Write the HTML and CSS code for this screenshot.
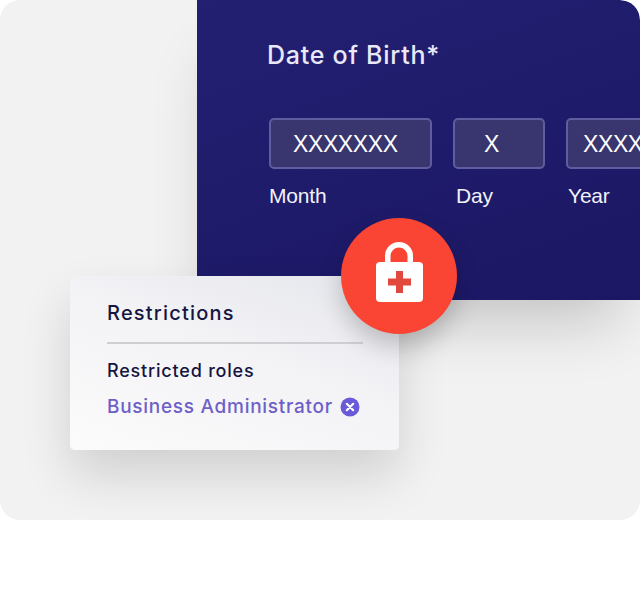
FILE: index.html
```html
<!DOCTYPE html>
<html>
<head>
    <meta charset="UTF-8">
    <title>Date of Birth restrictions</title>
    <link rel="stylesheet" href="styles.css">
</head>
<body>
    <div class="panel">
        <div class="form-card">
            <h2 class="form-title">Date of Birth*</h2>
            <div class="fields">
                <div class="field field-month">
                    <div class="field-box">XXXXXXX</div>
                    <span class="field-label">Month</span>
                </div>
                <div class="field field-day">
                    <div class="field-box">X</div>
                    <span class="field-label">Day</span>
                </div>
                <div class="field field-year">
                    <div class="field-box">XXXX</div>
                    <span class="field-label">Year</span>
                </div>
            </div>
        </div>

        <div class="restrictions">
            <h3 class="restrictions-title">Restrictions</h3>
            <p class="restrictions-sub">Restricted roles</p>
            <div class="role">
                <span>Business Administrator</span>
                <svg class="role-x" width="20" height="20" viewBox="0 0 20 20">
                    <circle cx="10" cy="10" r="9.5" fill="#6a5ad8"/>
                    <path d="M6.8 6.8l6.4 6.4M13.2 6.8l-6.4 6.4" stroke="#ffffff" stroke-width="2.2" stroke-linecap="round"/>
                </svg>
            </div>
        </div>

        <div class="lock-badge">
            <svg class="lock-icon" width="47" height="60" viewBox="0 0 47 60">
                <path d="M11.75 24V14a11.25 11.25 0 0 1 22.5 0v10" fill="none" stroke="#ffffff" stroke-width="5.5"/>
                <rect x="0" y="20" width="47" height="40" rx="4" fill="#ffffff"/>
                <path d="M20 29h7v7.5h8v7h-8v7.5h-7v-7.5h-8v-7h8z" fill="#e2493d"/>
            </svg>
        </div>
    </div>
</body>
</html>
```

FILE: styles.css
```css
body {
    background-color: #ffffff;
    margin: 0;
    padding: 0;
}

.panel {
    position: relative;
    height: 520px;
    width: 640px;
    background-color: #f2f2f2;
    border-radius: 20px;
    overflow: hidden;
}

.form-card {
    margin-left: 197px;
    height: 300px;
    box-sizing: border-box;
    padding: 40px 0 0 70px;
    background: linear-gradient(160deg, #232072 0%, #1b1764 100%);
    border-top-right-radius: 20px;
    box-shadow: 0 40px 60px -20px rgba(0, 0, 0, 0.2);
}

.form-title {
    margin: 0;
    color: #e9e8f8;
    font-family: "Inter", sans-serif;
    font-size: 25px;
    font-weight: 500;
    line-height: 30px;
    letter-spacing: 0.75px;
}

.fields {
    display: flex;
    margin: 48px 0 0 2px;
    gap: 21px;
    width: 400px;
}

.field-month {
    width: 163px;
    flex: none;
}

.field-day {
    width: 92px;
    flex: none;
}

.field-year {
    width: 100px;
    flex: none;
}

.field-box {
    box-sizing: border-box;
    height: 51px;
    padding-left: 22px;
    border: 2px solid #5f5c9f;
    border-radius: 5px;
    background-color: #38356f;
    color: #ffffff;
    font-family: "Liberation Sans", sans-serif;
    font-size: 23px;
    letter-spacing: -0.4px;
    line-height: 49px;
    white-space: nowrap;
}

.field-day .field-box {
    padding-left: 29px;
}

.field-year .field-box {
    padding-left: 15px;
}

.field-label {
    display: block;
    margin-top: 15px;
    color: #f2f2fa;
    font-family: "Liberation Sans", sans-serif;
    font-size: 21px;
    letter-spacing: -0.2px;
    line-height: 24px;
}

.field-day .field-label {
    margin-left: 3px;
}

.field-year .field-label {
    margin-left: 2px;
}

.restrictions {
    position: absolute;
    left: 70px;
    top: 276px;
    width: 329px;
    height: 174px;
    box-sizing: border-box;
    padding: 24px 36px 0 37px;
    background: linear-gradient(200deg, #e4e5eb 0%, #f3f3f6 45%, #fbfbfb 100%);
    border-radius: 5px;
    box-shadow: 0 25px 50px rgba(0, 0, 0, 0.14);
    font-family: "Inter", sans-serif;
    color: #16153f;
}

.restrictions-title {
    margin: 0;
    padding-bottom: 16px;
    border-bottom: 2px solid #cfcfd2;
    font-size: 20px;
    font-weight: 500;
    line-height: 26px;
    letter-spacing: 1.2px;
}

.restrictions-sub {
    margin: 15px 0 0;
    font-size: 18px;
    font-weight: 500;
    line-height: 24px;
    letter-spacing: 0.8px;
}

.role {
    display: flex;
    align-items: center;
    gap: 7px;
    margin-top: 12px;
    color: #6e60c8;
    font-size: 19px;
    font-weight: 500;
    line-height: 24px;
    letter-spacing: 0.72px;
    white-space: nowrap;
}

.role-x {
    flex: none;
}

.lock-badge {
    position: absolute;
    left: 341px;
    top: 218px;
    width: 116px;
    height: 116px;
    display: flex;
    align-items: center;
    justify-content: center;
    border-radius: 50%;
    background-color: #fb4534;
    box-shadow: 0 12px 24px rgba(0, 0, 0, 0.2);
}

.lock-icon {
    margin-bottom: 8px;
}
```
